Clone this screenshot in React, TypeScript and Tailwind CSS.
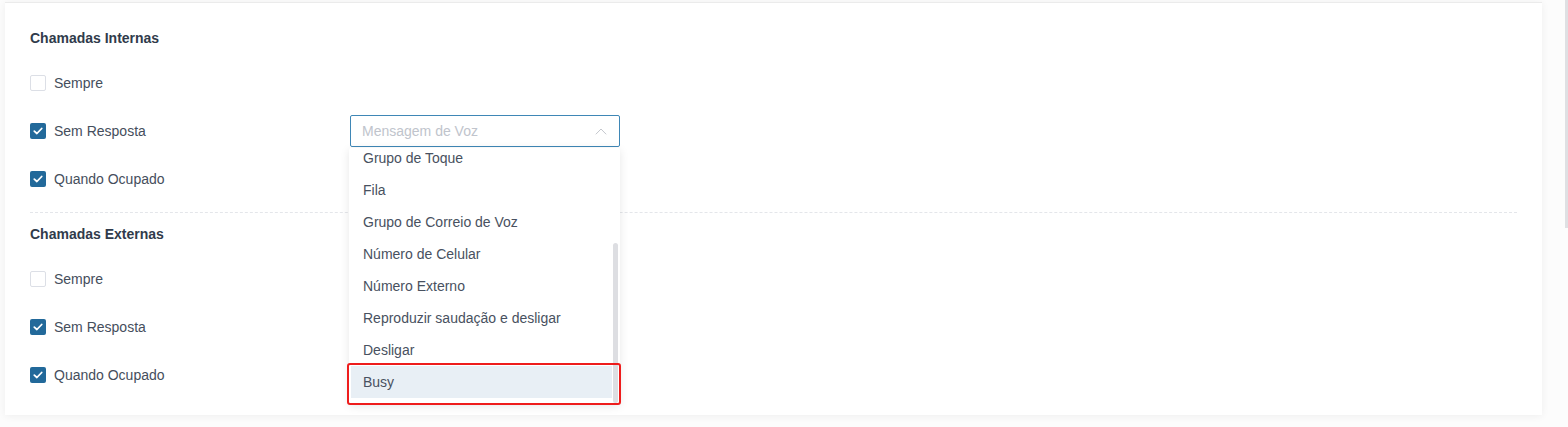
import React from "react";

type Row = { label: string; checked: boolean };

const internas: Row[] = [
  { label: "Sempre", checked: false },
  { label: "Sem Resposta", checked: true },
  { label: "Quando Ocupado", checked: true },
];

const externas: Row[] = [
  { label: "Sempre", checked: false },
  { label: "Sem Resposta", checked: true },
  { label: "Quando Ocupado", checked: true },
];

const options = [
  "Grupo de Toque",
  "Fila",
  "Grupo de Correio de Voz",
  "Número de Celular",
  "Número Externo",
  "Reproduzir saudação e desligar",
  "Desligar",
  "Busy",
];

function Checkbox({ checked }: { checked: boolean }) {
  if (!checked) {
    return <span className="block w-4 h-4 rounded-[2px] border border-[#dcdfe6] bg-white" />;
  }
  return (
    <span className="flex items-center justify-center w-4 h-4 rounded-[2px] bg-[#22699a]">
      <svg width="10" height="8" viewBox="0 0 10 8" fill="none">
        <path d="M1.3 4.1 L3.9 6.5 L8.7 1.5" stroke="#ffffff" strokeWidth="1.8" strokeLinecap="round" strokeLinejoin="round" />
      </svg>
    </span>
  );
}

function Dropdown() {
  return (
    <div className="absolute left-[-1px] top-[33px] w-[271px] h-[256px] bg-white shadow-[0_2px_10px_rgba(0,0,0,0.1)] rounded-[2px] z-10">
      <div className="h-full overflow-hidden">
        <ul className="mt-[-6px]">
          {options.map((o) => (
            <li
              key={o}
              className={`ml-[2px] mr-[8px] h-[32px] flex items-center pl-[12px] text-[14px] text-[#485160] ${
                o === "Busy" ? "bg-[#e8eff5]" : ""
              }`}
            >
              {o}
            </li>
          ))}
        </ul>
      </div>
      {/* scroll thumb */}
      <div className="absolute right-[2px] top-[95px] w-[5px] h-[160px] rounded-[3px] bg-[#dddee2]" />
      {/* highlight outline */}
      <div className="absolute left-[-2px] top-[215px] w-[274px] h-[42px] border-2 border-[#ee1c1c] rounded-[3px]" />
    </div>
  );
}

function Select() {
  return (
    <div className="relative w-[270px] h-[32px]">
      <div className="h-full border border-[#3f87b6] rounded-[2px] flex items-center justify-between pl-[11px] pr-[12px] bg-white">
        <span className="text-[14px] text-[#c0c4cc]">Mensagem de Voz</span>
        <svg width="12" height="7" viewBox="0 0 12 7" fill="none">
          <path d="M0.8 6.3 L6 1 L11.2 6.3" stroke="#c4c7cd" strokeWidth="1" />
        </svg>
      </div>
      <Dropdown />
    </div>
  );
}

function Section({ title, rows, withSelect }: { title: string; rows: Row[]; withSelect?: boolean }) {
  return (
    <div>
      <div className="h-[20px] flex items-center text-[14px] font-bold text-[#303b4b]">{title}</div>
      <div className="mt-[11px]">
        {rows.map((r, i) => (
          <div key={i} className="h-[48px] flex items-center">
            <div className="w-[320px] flex items-center gap-[8px]">
              <Checkbox checked={r.checked} />
              <span className="text-[14px] text-[#454e5c]">{r.label}</span>
            </div>
            {withSelect && i === 1 && <Select />}
          </div>
        ))}
      </div>
    </div>
  );
}

export default function App() {
  return (
    <div className="relative w-[1568px] h-[427px] bg-[#fcfcfc] overflow-hidden font-['Liberation_Sans',Arial,sans-serif]">
      <div className="pt-[2px] pl-[5px] w-[1542px]">
        <div className="h-[413px] bg-white border-t border-[#ebebeb] shadow-[0_1px_8px_rgba(0,0,0,0.06)] px-[25px] pt-[25px]">
          <Section title="Chamadas Internas" rows={internas} withSelect />
          <div className="mt-[9px] mb-[11px] border-t border-dashed border-[#e4e6ea]" />
          <Section title="Chamadas Externas" rows={externas} />
        </div>
      </div>
      {/* page scrollbar */}
      <div className="absolute right-0 top-0 w-[3px] h-[228px] bg-[#dfe0e3]" />
    </div>
  );
}
